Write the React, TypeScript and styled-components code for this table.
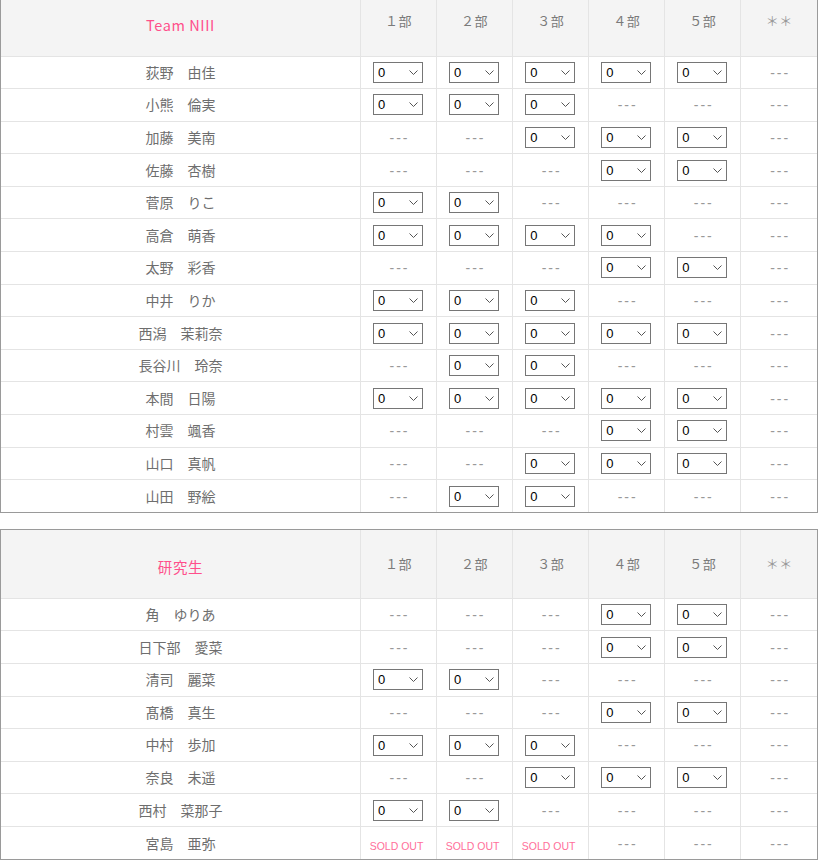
import React from "react";
import styled, { createGlobalStyle } from "styled-components";

const Global = createGlobalStyle`
  html, body { margin: 0; padding: 0; background: #fff; }
  body { font-family: "Noto Sans CJK JP", "Noto Sans", sans-serif; }
`;

const Page = styled.div`
  margin-top: -13px;
  display: flex;
  flex-direction: column;
  align-items: flex-start;
  gap: 16px;
`;

const Frame = styled.div`
  border: 1px solid #9a9a9a;
`;

const Table = styled.table`
  width: 816px;
  border-collapse: collapse;
  border-style: hidden;
  table-layout: fixed;
`;

const HeadCell = styled.th<{ $team?: boolean; $light?: boolean }>`
  height: 68px;
  padding: ${(p) => (p.$team ? "5px 0 0" : "0 0 2px")};
  box-sizing: border-box;
  background: #f4f4f4;
  border: 1px solid #e4e4e4;
  font-weight: normal;
  text-align: center;
  vertical-align: middle;
  font-size: ${(p) => (p.$team ? "14.5px" : "13px")};
  color: ${(p) => (p.$team ? "#ff4f8b" : p.$light ? "#999" : "#7a7a7a")};
  width: ${(p) => (p.$team ? "359px" : "76px")};
  letter-spacing: ${(p) => (p.$team ? "0.6px" : "0.5px")};
`;

const Row = styled.tr`
  height: 32.6px;
`;

const NameCell = styled.td`
  border: 1px solid #e4e4e4;
  text-align: center;
  vertical-align: middle;
  font-size: 14px;
  color: #6e6e6e;
  padding: 0 0 1px;
  white-space: pre;
`;

const Cell = styled.td`
  border: 1px solid #e4e4e4;
  text-align: center;
  vertical-align: middle;
  padding: 0;
  line-height: 1;
`;

const Dash = styled.span`
  display: inline-block;
  font-family: "Liberation Sans", Arial, sans-serif;
  font-size: 14px;
  color: #999;
  letter-spacing: 2px;
  margin-right: -2px;
  position: relative;
  top: -1px;
`;

const SoldOut = styled.span`
  font-family: "Liberation Sans", Arial, sans-serif;
  font-size: 10.5px;
  color: #ff6f9a;
  position: relative;
  left: -2px;
`;

const SelectWrap = styled.span`
  position: relative;
  display: inline-block;
  width: 50px;
  height: 21px;
  margin-left: -1px;
  vertical-align: middle;
`;

const Select = styled.select`
  appearance: none;
  -webkit-appearance: none;
  display: block;
  width: 50px;
  height: 21px;
  box-sizing: border-box;
  border: 1px solid #767676;
  border-radius: 0;
  background: #fff;
  font-family: "Liberation Sans", Arial, sans-serif;
  font-size: 13px;
  color: #000;
  padding: 0 0 0 4px;
  margin: 0;
`;

const Chevron = styled.svg`
  position: absolute;
  right: 5px;
  top: 8px;
  width: 9px;
  height: 5px;
  pointer-events: none;
`;

type C = "S" | "D" | "O";

const team: [string, string][] = [
  ["荻野　由佳", "SSSSSD"],
  ["小熊　倫実", "SSSDDD"],
  ["加藤　美南", "DDSSSD"],
  ["佐藤　杏樹", "DDDSSD"],
  ["菅原　りこ", "SSDDDD"],
  ["高倉　萌香", "SSSSDD"],
  ["太野　彩香", "DDDSSD"],
  ["中井　りか", "SSSDDD"],
  ["西潟　茉莉奈", "SSSSSD"],
  ["長谷川　玲奈", "DSSDDD"],
  ["本間　日陽", "SSSSSD"],
  ["村雲　颯香", "DDDSSD"],
  ["山口　真帆", "DDSSSD"],
  ["山田　野絵", "DSSDDD"],
];

const kenkyu: [string, string][] = [
  ["角　ゆりあ", "DDDSSD"],
  ["日下部　愛菜", "DDDSSD"],
  ["清司　麗菜", "SSDDDD"],
  ["髙橋　真生", "DDDSSD"],
  ["中村　歩加", "SSSDDD"],
  ["奈良　未遥", "DDSSSD"],
  ["西村　菜那子", "SSDDDD"],
  ["宮島　亜弥", "OOODDD"],
];

const heads = ["１部", "２部", "３部", "４部", "５部", "＊＊"];

function Slot({ c }: { c: C }) {
  if (c === "S")
    return (
      <SelectWrap>
        <Select defaultValue="0">
          {[0, 1, 2, 3, 4, 5].map((n) => (
            <option key={n} value={n}>
              {n}
            </option>
          ))}
        </Select>
        <Chevron viewBox="0 0 9 5">
          <path d="M0.5 0.5 L4.5 4.5 L8.5 0.5" fill="none" stroke="#555" strokeWidth="1" />
        </Chevron>
      </SelectWrap>
    );
  if (c === "O") return <SoldOut>SOLD OUT</SoldOut>;
  return <Dash>---</Dash>;
}

function TeamTable({ title, rows }: { title: string; rows: [string, string][] }) {
  return (
    <Frame>
      <Table>
        <thead>
          <tr>
            <HeadCell $team>{title}</HeadCell>
            {heads.map((h) => (
              <HeadCell key={h} $light={h === "＊＊"}>
                {h}
              </HeadCell>
            ))}
          </tr>
        </thead>
        <tbody>
          {rows.map(([name, cells]) => (
            <Row key={name}>
              <NameCell>{name}</NameCell>
              {cells.split("").map((c, i) => (
                <Cell key={i}>
                  <Slot c={c as C} />
                </Cell>
              ))}
            </Row>
          ))}
        </tbody>
      </Table>
    </Frame>
  );
}

export default function App() {
  return (
    <>
      <Global />
      <Page>
        <TeamTable title="Team NIII" rows={team} />
        <TeamTable title="研究生" rows={kenkyu} />
      </Page>
    </>
  );
}
